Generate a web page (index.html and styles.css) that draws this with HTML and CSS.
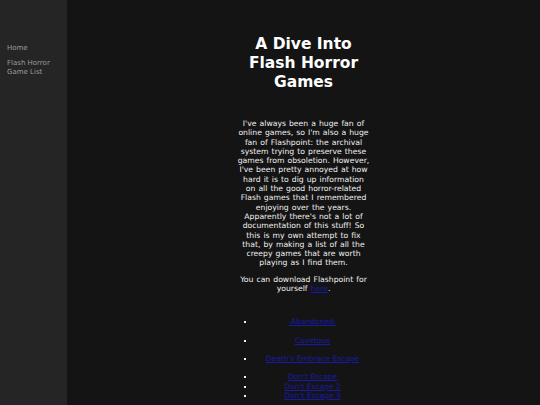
FILE: index.html
```html
<!DOCTYPE html>
<html>
<head>
<meta charset="utf-8">
<link rel="stylesheet" href="styles.css">
</head>
<body>
<div class="page">
  <nav class="sidebar">
    <a class="nav-link" href="#">Home</a>
    <a class="nav-link" href="#">Flash Horror Game List</a>
  </nav>
  <main class="main">
    <div class="content">
      <h1 class="title">A Dive Into Flash Horror Games</h1>
      <p class="intro">I've always been a huge fan of online games, so I'm also a huge fan of Flashpoint: the archival system trying to preserve these games from obsoletion. However, I've been pretty annoyed at how hard it is to dig up information on all the good horror-related Flash games that I remembered enjoying over the years. Apparently there's not a lot of documentation of this stuff! So this is my own attempt to fix that, by making a list of all the creepy games that are worth playing as I find them.</p>
      <p class="intro">You can download Flashpoint for yourself <a href="#">here</a>.</p>
      <ul class="games">
        <li class="spaced"><a href="#">-Abandoned-</a></li>
        <li class="spaced"><a href="#">Covetous</a></li>
        <li class="spaced"><a href="#">Death's Embrace Escape</a></li>
        <li><a href="#">Don't Escape</a></li>
        <li><a href="#">Don't Escape 2</a></li>
        <li><a href="#">Don't Escape 3</a></li>
      </ul>
    </div>
  </main>
</div>
</body>
</html>
```
FILE: styles.css
```css
html, body {
  margin: 0;
  padding: 0;
  height: 100%;
  background: #141414;
  font-family: "DejaVu Sans", Verdana, sans-serif;
  color: #f0f0f0;
}
.page {
  display: flex;
  height: 405px;
  overflow: hidden;
}
.sidebar {
  width: 67px;
  flex-shrink: 0;
  background: #252525;
  padding: 44px 6px 0 7px;
  box-sizing: border-box;
  display: flex;
  flex-direction: column;
  gap: 6px;
}
.nav-link {
  color: #9a9a9a;
  text-decoration: none;
  font-size: 7px;
  line-height: 9px;
}
.main {
  flex: 1;
  display: flex;
  justify-content: center;
}
.content {
  width: 133px;
  flex-shrink: 0;
  text-align: center;
  padding-top: 35px;
}
.title {
  font-size: 15.5px;
  line-height: 19px;
  font-weight: bold;
  margin: 0 0 27px;
  color: #ffffff;
}
.intro {
  font-size: 7.7px;
  line-height: 9.3px;
  word-spacing: 0.6px;
  margin: 0 0 7px;
}
.intro a, .games a {
  color: #1a1aa8;
}
.games {
  list-style: square;
  margin: 24px 0 0;
  padding: 0 0 0 18px;
  font-size: 7.5px;
  line-height: 9.3px;
}
.games li.spaced {
  margin-bottom: 9px;
}
```
